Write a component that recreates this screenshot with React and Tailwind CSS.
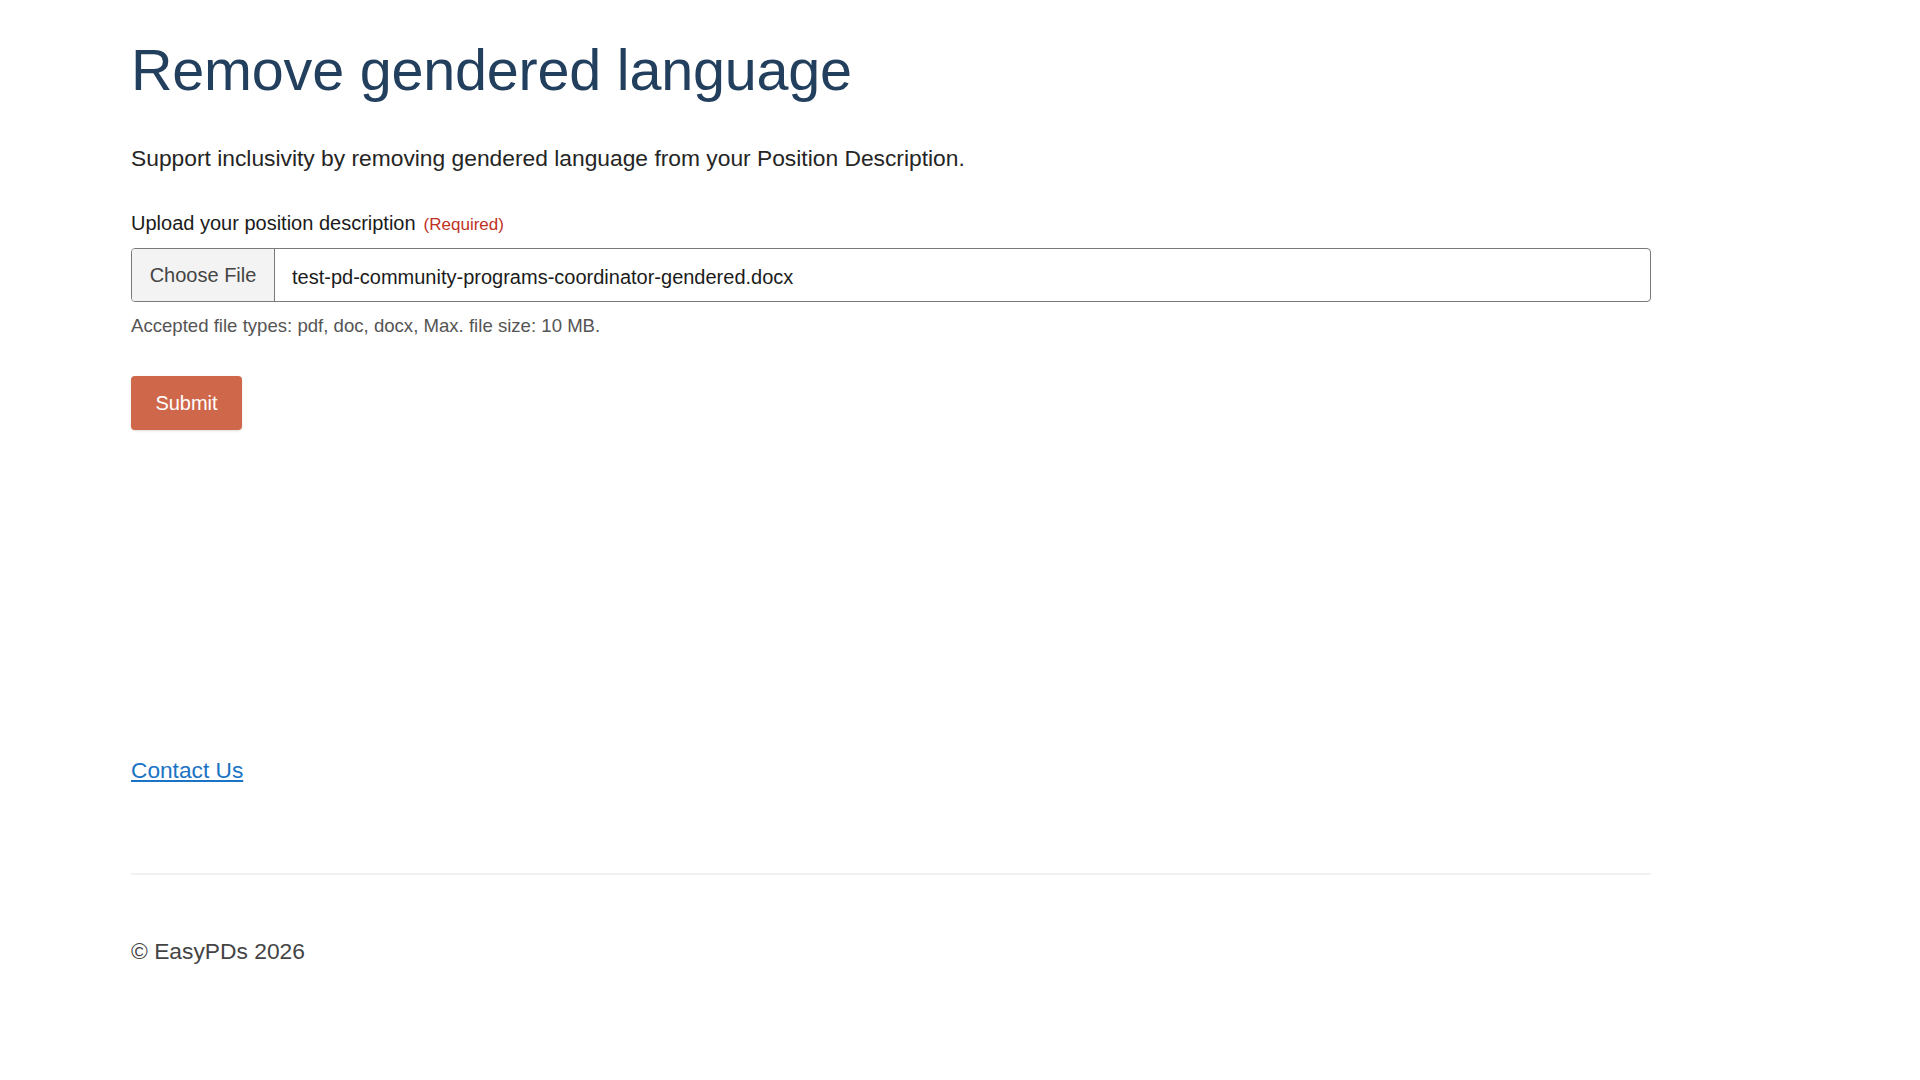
export default function App() {
  return (
    <div className="min-h-screen bg-white font-['Liberation_Sans',Arial,sans-serif]">
      <div className="ml-[131px] w-[1520px]">
        <main>
          <h1 className="pt-[36px] text-[57.5px] leading-[68px] text-[#233f5e] tracking-[-0.2px]">
            Remove gendered language
          </h1>
          <p className="mt-[39px] text-[22.8px] leading-[30px] text-[#252525]">
            Support inclusivity by removing gendered language from your Position Description.
          </p>

          <form className="mt-[35px]" onSubmit={(e) => e.preventDefault()}>
            <label className="flex items-baseline gap-[8px] text-[20px] leading-[30px] text-[#1b1b1b]">
              Upload your position description
              <span className="text-[17px] text-[#c0311f]">(Required)</span>
            </label>
            <div className="mt-[8px] flex h-[54px] items-stretch rounded-[4px] border border-[#7a7a7a] overflow-hidden">
              <div className="flex w-[143px] items-center justify-center border-r border-[#7a7a7a] bg-[#f3f3f3] text-[20px] text-[#444]">
                Choose File
              </div>
              <div className="flex items-center pl-[17px] pt-[3px] text-[20px] text-[#1b1b1b]">
                test-pd-community-programs-coordinator-gendered.docx
              </div>
            </div>
            <p className="mt-[12px] text-[18.6px] leading-[24px] text-[#555]">
              Accepted file types: pdf, doc, docx, Max. file size: 10 MB.
            </p>
            <button
              type="submit"
              className="mt-[38px] h-[54px] w-[111px] rounded-[4px] bg-[#cf674a] text-[20px] text-white shadow-sm"
            >
              Submit
            </button>
          </form>
        </main>

        <footer>
          <div className="mt-[325px]">
            <a href="#" className="text-[22.7px] leading-[30px] text-[#1a73c4] underline">
              Contact Us
            </a>
          </div>
          <hr className="mt-[88px] border-t-2 border-[#f1f1f1]" />
          <p className="mt-[61px] text-[22.8px] leading-[30px] text-[#444]">
            © EasyPDs 2026
          </p>
        </footer>
      </div>
    </div>
  );
}
